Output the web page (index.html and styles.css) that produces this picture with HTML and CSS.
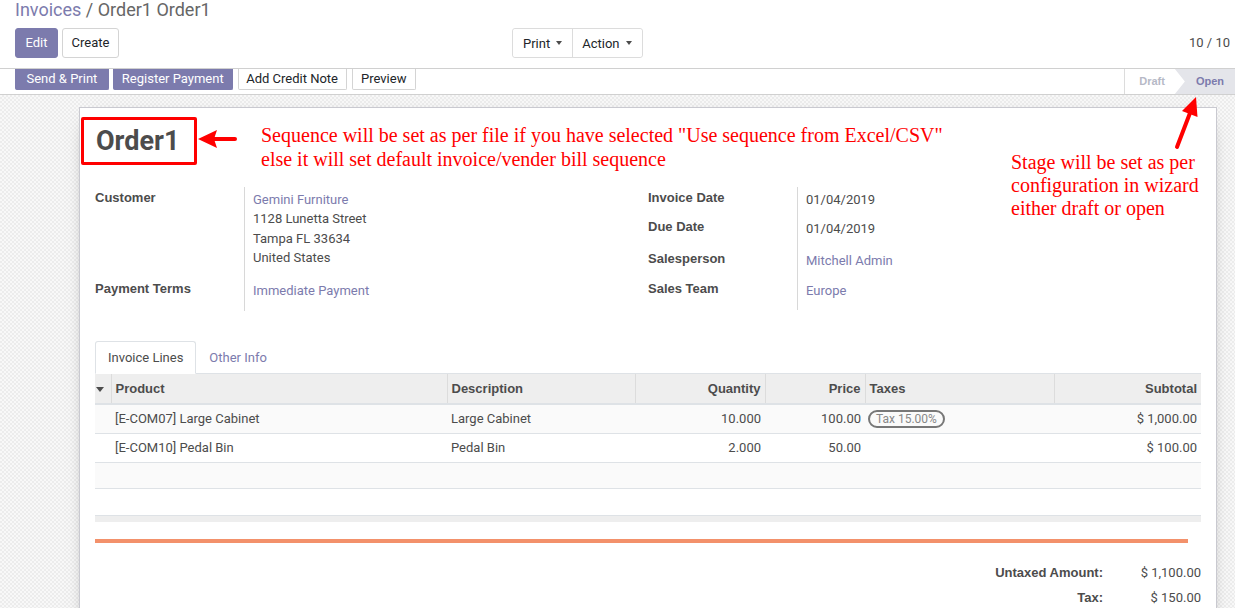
FILE: index.html
```html
<!DOCTYPE html>
<html>
<head>
<meta charset="utf-8">
<title>Invoices / Order1 Order1</title>
<link rel="stylesheet" href="styles.css">
</head>
<body>
<div class="cp">
  <div class="bc"><span class="bc-link">Invoices</span><span class="bc-cur"> / Order1 Order1</span></div>
  <div class="cp-row">
    <div class="cp-left">
      <button class="btn btn-primary">Edit</button>
      <button class="btn">Create</button>
    </div>
    <div class="cp-mid">
      <div class="btn-group">
        <button class="btn-dd">Print<span class="caret"></span></button>
        <button class="btn-dd">Action<span class="caret"></span></button>
      </div>
    </div>
    <div class="pager">10 / 10</div>
  </div>
</div>

<div class="statusbar">
  <div class="sb-buttons">
    <button class="sbtn sbtn-primary sb-send">Send &amp; Print</button>
    <button class="sbtn sbtn-primary sb-reg">Register Payment</button>
    <button class="sbtn sb-credit">Add Credit Note</button>
    <button class="sbtn sb-preview">Preview</button>
  </div>
  <div class="sb-status">
    <span class="st st-draft">Draft</span>
    <span class="st st-open">Open</span>
  </div>
</div>

<div class="sheet-bg">
  <div class="sheet">
    <div class="title-row">
      <h1 class="title">Order1</h1>
      <svg class="left-arrow" width="40" height="22" viewBox="0 0 40 22">
        <line x1="15" y1="11" x2="37" y2="11" stroke="#ff0000" stroke-width="4" stroke-linecap="round"/>
        <polygon points="0,11 19,2 16,11 19,20" fill="#ff0000"/>
      </svg>
      <p class="note">Sequence will be set as per file if you have selected "Use sequence from Excel/CSV"<br>else it will set default invoice/vender bill sequence</p>
    </div>
    <p class="stage-note">Stage will be set as per<br>configuration in wizard<br>either draft or open</p>

    <div class="groups">
      <div class="group">
        <div class="lbl">Customer</div>
        <div class="val pb11">
          <div class="addr link">Gemini Furniture</div>
          <div class="addr">1128 Lunetta Street</div>
          <div class="addr">Tampa FL 33634</div>
          <div class="addr">United States</div>
        </div>
        <div class="lbl">Payment Terms</div>
        <div class="val pb10"><span class="link">Immediate Payment</span></div>
      </div>
      <div class="group">
        <div class="lbl">Invoice Date</div>
        <div class="val pb7">01/04/2019</div>
        <div class="lbl">Due Date</div>
        <div class="val pb10">01/04/2019</div>
        <div class="lbl">Salesperson</div>
        <div class="val pb7"><span class="link">Mitchell Admin</span></div>
        <div class="lbl">Sales Team</div>
        <div class="val pb9"><span class="link">Europe</span></div>
      </div>
    </div>

    <div class="notebook">
      <ul class="tabs">
        <li class="tab active">Invoice Lines</li>
        <li class="tab">Other Info</li>
      </ul>
      <table class="lines">
        <colgroup>
          <col class="c-handle"><col class="c-product"><col class="c-desc"><col class="c-qty"><col class="c-price"><col class="c-tax"><col class="c-sub">
        </colgroup>
        <thead>
          <tr>
            <th class="handle"><span class="sort-caret"></span></th>
            <th>Product</th>
            <th>Description</th>
            <th class="num">Quantity</th>
            <th class="num">Price</th>
            <th>Taxes</th>
            <th class="num">Subtotal</th>
          </tr>
        </thead>
        <tbody>
          <tr class="odd">
            <td></td>
            <td>[E-COM07] Large Cabinet</td>
            <td>Large Cabinet</td>
            <td class="num">10.000</td>
            <td class="num">100.00</td>
            <td><span class="badge">Tax 15.00%</span></td>
            <td class="num">$ 1,000.00</td>
          </tr>
          <tr>
            <td></td>
            <td>[E-COM10] Pedal Bin</td>
            <td>Pedal Bin</td>
            <td class="num">2.000</td>
            <td class="num">50.00</td>
            <td></td>
            <td class="num">$ 100.00</td>
          </tr>
          <tr class="odd empty">
            <td></td><td></td><td></td><td></td><td></td><td></td><td></td>
          </tr>
          <tr class="blank">
            <td></td><td></td><td></td><td></td><td></td><td></td><td></td>
          </tr>
        </tbody>
        <tfoot>
          <tr><td colspan="7"></td></tr>
        </tfoot>
      </table>
    </div>

    <div class="orange-line"></div>

    <div class="totals">
      <div class="t-lbl">Untaxed Amount:</div>
      <div class="t-val">$ 1,100.00</div>
      <div class="t-lbl">Tax:</div>
      <div class="t-val">$ 150.00</div>
    </div>
  </div>

  <svg class="up-arrow" width="35" height="56" viewBox="0 0 35 56">
    <line x1="7" y1="52" x2="20" y2="18" stroke="#ff0000" stroke-width="4" stroke-linecap="round"/>
    <polygon points="26,2 27.5,22 12,16" fill="#ff0000"/>
  </svg>
</div>
</body>
</html>
```

FILE: styles.css
```css
* { box-sizing: border-box; }
html, body { margin: 0; padding: 0; }
body {
  font-family: Roboto, "Noto Sans", sans-serif;
  font-size: 13px;
  line-height: 20px;
  color: #4c4c4c;
  background: #fff;
  overflow: hidden;
}
button { font-family: inherit; font-size: 13px; cursor: pointer; }
p { margin: 0; }

/* control panel */
.cp {
  height: 69px;
  border-bottom: 1px solid #d0d0d0;
  padding: 0 5px 0 15px;
}
.bc { font-size: 18px; line-height: 20px; color: #666; white-space: nowrap; }
.bc-link { color: #7c7bad; }
.cp-row {
  display: grid;
  grid-template-columns: 497px 1fr auto;
  align-items: center;
  height: 30px;
  margin-top: 8px;
}
.cp-left { display: flex; gap: 4px; }
.btn {
  height: 30px;
  padding: 0 8.5px;
  border: 1px solid #d4d4d4;
  border-radius: 3px;
  background: #fff;
  color: #212529;
  line-height: 28px;
}
.btn-primary { background: #7c7bad; border-color: #7c7bad; color: #fff; padding: 0 9.5px; }
.btn-group {
  display: inline-flex;
  border: 1px solid #dcdcdc;
  border-radius: 3px;
  height: 30px;
}
.btn-dd {
  display: flex;
  align-items: center;
  border: 0;
  background: #fff;
  color: #212529;
  padding: 0 10px;
  height: 28px;
}
.btn-dd + .btn-dd { border-left: 1px solid #dcdcdc; padding: 0 10px 0 9px; }
.btn-dd:first-child { border-radius: 3px 0 0 3px; }
.btn-dd:last-child { border-radius: 0 3px 3px 0; }
.caret {
  display: inline-block;
  margin-left: 6px;
  width: 0; height: 0;
  border-left: 3.5px solid transparent;
  border-right: 3.5px solid transparent;
  border-top: 4px solid #4c4c4c;
}
.pager { color: #4c4c4c; }

/* statusbar */
.statusbar {
  height: 26px;
  border-bottom: 1px solid #d0d0d0;
  display: flex;
  justify-content: space-between;
  align-items: flex-start;
}
.sb-buttons { display: flex; gap: 4px; padding-left: 15px; }
.sbtn {
  height: 21px;
  padding: 0 9px;
  border: 1px solid #d4d4d4;
  border-top: 0;
  border-radius: 0 0 2px 2px;
  background: #fff;
  color: #212529;
  line-height: 20px;
}
.sbtn-primary { background: #7c7bad; border-color: #7c7bad; color: #fff; }
.sb-send { padding: 0 10.5px; }
.sb-reg { padding: 0 8px; }
.sb-credit { padding: 0 7.5px; margin-left: 1px; }
.sb-preview { padding: 0 8.5px; margin-left: 1px; }
.sb-status { display: flex; height: 25px; }
.st {
  font-family: "Liberation Sans", Arial, sans-serif;
  font-size: 11px;
  font-weight: 700;
  line-height: 25px;
  height: 25px;
}
.st-draft { border-left: 1px solid #dcdcdc; color: #b6b9c6; padding: 0 10px 0 14px; }
.st-open {
  background: #e4e5ea;
  color: #7c7bad;
  padding: 0 11px 0 21px;
  clip-path: polygon(0 0, 100% 0, 100% 100%, 0 100%, 10px 50%);
}

/* sheet */
.sheet-bg {
  position: relative;
  padding: 12px 18px 0 79px;
  min-height: 513px;
  background-color: #f8f8f8;
  background-image: repeating-conic-gradient(#ececec 0% 25%, transparent 0% 50%);
  background-size: 4px 4px;
}
.sheet {
  position: relative;
  background: #fff;
  border: 1px solid #c9c9d0;
  box-shadow: 0 5px 20px -15px #000;
  padding: 9px 15px 30px;
  min-height: 520px;
}
.title-row { display: flex; align-items: flex-start; }
.title {
  margin: 0 0 0 -14px;
  width: 116px;
  height: 48px;
  flex: none;
  border: 3px solid #ff0000;
  border-radius: 2px;
  padding-left: 12px;
  font-size: 27px;
  font-weight: 700;
  line-height: 43px;
  color: #4c4c4c;
  white-space: nowrap;
}
.left-arrow { flex: none; margin: 11px 0 0 1px; }
.note {
  margin: 6px 0 0 23px;
  font-family: "Liberation Serif", serif;
  font-size: 20px;
  line-height: 24px;
  color: #ff0000;
  white-space: nowrap;
}
.stage-note {
  position: absolute;
  left: 931px;
  top: 43px;
  font-family: "Liberation Serif", serif;
  font-size: 20px;
  line-height: 23px;
  color: #ff0000;
  white-space: nowrap;
}
.up-arrow { position: absolute; left: 1170px; top: 0; }

/* groups */
.groups { display: grid; grid-template-columns: 1fr 1fr; margin-top: 16px; }
.group { display: grid; grid-template-columns: 149px 1fr; align-content: start; }
.lbl {
  font-family: "Liberation Sans", Arial, sans-serif;
  font-weight: 700;
  line-height: 20px;
  padding-top: 0.5px;
}
.val { border-left: 1px solid #d8d8d8; padding: 2.5px 0 0 8px; line-height: 20px; }
.addr { line-height: 19.6px; }
.link { color: #7c7bad; }
.pb7 { padding-bottom: 7px; }
.pb9 { padding-bottom: 9px; }
.pb10 { padding-bottom: 9.5px; }
.pb11 { padding-bottom: 11px; }

/* notebook */
.notebook { margin-top: 30px; }
.tabs {
  list-style: none;
  margin: 0;
  padding: 0;
  display: flex;
  border-bottom: 1px solid #dee2e6;
}
.tab {
  padding: 0 12px;
  line-height: 31px;
  border: 1px solid transparent;
  border-radius: 3px 3px 0 0;
  margin-bottom: -1px;
  color: #7c7bad;
}
.tab.active { color: #4c4c4c; background: #fff; border-color: #dee2e6 #dee2e6 #fff; }

.lines { width: 100%; border-collapse: collapse; table-layout: fixed; }
.c-handle { width: 16px; }
.c-product { width: 336px; }
.c-desc { width: 188px; }
.c-qty { width: 130px; }
.c-price { width: 100px; }
.c-tax { width: 189px; }
.c-sub { width: 147px; }
.lines th {
  background: #eee;
  font-family: "Liberation Sans", Arial, sans-serif;
  font-weight: 700;
  text-align: left;
  padding: 5px 4px 4px;
  line-height: 20px;
  border-bottom: 2px solid #dee2e6;
  border-left: 1px solid #dcdcdc;
  white-space: nowrap;
}
.lines th:first-child { border-left: 0; }
.lines th.handle { padding: 5px 0 4px; text-align: center; }
.sort-caret {
  display: inline-block;
  width: 0; height: 0;
  vertical-align: middle;
  margin-left: -5px;
  border-left: 4px solid transparent;
  border-right: 4px solid transparent;
  border-top: 5px solid #4c4c4c;
}
.lines td {
  padding: 4px;
  line-height: 20px;
  border-bottom: 1px solid #dee2e6;
  white-space: nowrap;
}
.lines .num { text-align: right; }
.lines tr.odd td { background: #fafafa; }
.lines tr.empty td { height: 26px; padding: 0; }
.lines tr.blank td { height: 27px; padding: 0; border-bottom: 0; }
.lines tfoot td { height: 7px; padding: 0; background: #eee; border-top: 1px solid #dee2e6; border-bottom: 0; }
.badge {
  display: inline-block;
  border: 2px solid #777;
  border-radius: 10px;
  padding: 0 6px;
  font-size: 12px;
  line-height: 14px;
  color: #888;
  margin-left: -1px;
}

.orange-line { height: 4px; background: #f3916b; margin: 17px 13px 0 0; }

.totals {
  display: grid;
  grid-template-columns: auto 98px;
  justify-content: end;
  margin-top: 17px;
}
.t-lbl {
  font-family: "Liberation Sans", Arial, sans-serif;
  font-weight: 700;
  text-align: right;
  line-height: 25px;
}
.t-val { text-align: right; line-height: 25px; }
```
